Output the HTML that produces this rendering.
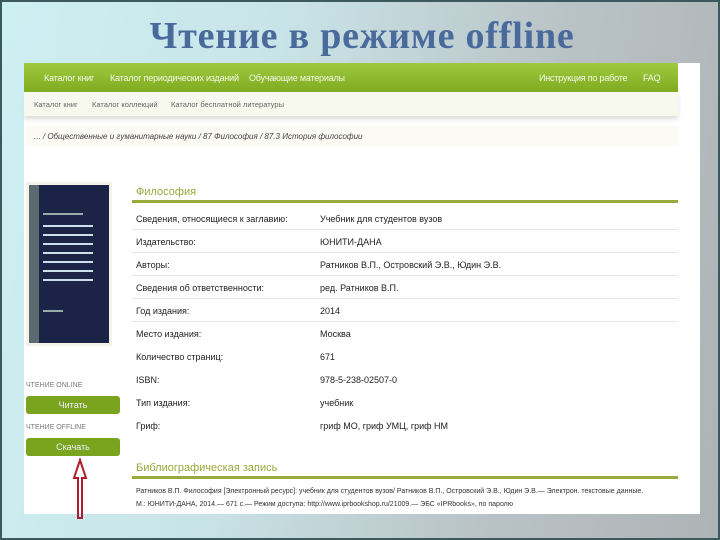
<!DOCTYPE html>
<html><head><meta charset="utf-8"><style>
*{margin:0;padding:0;box-sizing:border-box}
body{width:720px;height:540px;overflow:hidden;position:relative;font-family:"Liberation Sans",sans-serif;
background:linear-gradient(100deg,#cdf0f3 0%,#c9e4e8 35%,#b9c3c6 70%,#aeb3b5 100%);border:2px solid #3c5a5e}
.t{position:absolute;left:0;width:720px;top:12px;text-align:center;font-family:"Liberation Serif","Noto Serif CJK SC",serif;font-weight:bold;font-size:38px;color:#4a6a9c;letter-spacing:.8px}
.shot{position:absolute;left:22px;top:61px;width:676px;height:451px;background:#fff}
.nav{position:absolute;left:0;top:0;width:654px;height:29px;background:linear-gradient(#9fca3e,#7fab22);color:#f4f8e6;font-size:9px;letter-spacing:-.2px;white-space:nowrap}
.nav span{position:absolute;top:10px}
.sub{position:absolute;left:0;top:29px;width:654px;height:24px;background:#f7f8ee;font-size:7.5px;color:#666;box-shadow:0 3px 4px #ddd;white-space:nowrap}
.sub span{position:absolute;top:8px}
.bc{position:absolute;left:2px;top:63px;width:652px;height:20px;background:#fbfbf3;font-size:8px;color:#444;font-style:italic;padding:6px 0 0 8px;white-space:nowrap}
.cover{position:absolute;left:2px;top:119px;width:86px;height:164px;background:#1b2347;border:3px solid #f3f3ea}
.cover i{position:absolute;left:0;top:0;width:10px;height:100%;background:#5a6a6e}
.cover b{position:absolute;left:14px;height:2px;width:50px;background:#9aa}
.lbl{position:absolute;left:2px;font-size:7px;color:#777}
.btn{position:absolute;left:2px;width:94px;height:18px;background:#7ba41e;border-radius:3px;color:#eef;font-size:9px;text-align:center;line-height:18px}
.h{position:absolute;left:112px;font-size:11px;color:#99a83a}
.ln{position:absolute;left:108px;width:546px;height:3px;background:#97ab3b}
.row{position:absolute;left:108px;width:546px;height:23px;border-bottom:1px solid #e6e6e6;font-size:9px;color:#222}
.row span{position:absolute;top:7px}
.bib{position:absolute;left:112px;font-size:7px;color:#333;white-space:nowrap}
</style></head><body>
<div class="t">Чтение в режиме offline</div>
<div class="shot">
<div class="nav"><span style="left:20px">Каталог книг</span><span style="left:86px">Каталог периодических изданий</span><span style="left:225px">Обучающие материалы</span><span style="left:515px">Инструкция по работе</span><span style="left:619px">FAQ</span></div>
<div class="sub"><span style="left:10px">Каталог книг</span><span style="left:68px">Каталог коллекций</span><span style="left:147px">Каталог бесплатной литературы</span></div>
<div class="bc">... / Общественные и гуманитарные науки / 87 Философия / 87.3 История философии</div>
<div class="cover"><i></i><b style="top:28px;width:40px"></b><b style="top:40px;height:60px;background:repeating-linear-gradient(#cde 0 2px,transparent 2px 9px)"></b><b style="top:125px;width:20px"></b></div>
<div class="lbl" style="top:319px">ЧТЕНИЕ ONLINE</div>
<div class="btn" style="top:333px">Читать</div>
<div class="lbl" style="top:361px">ЧТЕНИЕ OFFLINE</div>
<div class="btn" style="top:375px">Скачать</div>
<svg style="position:absolute;left:47px;top:395px" width="18" height="62"><path d="M9 2 L15 20 L11 20 L11 60 L7 60 L7 20 L3 20 Z" fill="none" stroke="#b01c2c" stroke-width="2"/></svg>
<div class="h" style="top:123px">Философия</div>
<div class="ln" style="top:137px"></div>
<div class="row" style="top:144px"><span style="left:4px">Сведения, относящиеся к заглавию:</span><span style="left:188px">Учебник для студентов вузов</span></div>
<div class="row" style="top:167px"><span style="left:4px">Издательство:</span><span style="left:188px">ЮНИТИ-ДАНА</span></div>
<div class="row" style="top:190px"><span style="left:4px">Авторы:</span><span style="left:188px">Ратников В.П., Островский Э.В., Юдин Э.В.</span></div>
<div class="row" style="top:213px"><span style="left:4px">Сведения об ответственности:</span><span style="left:188px">ред. Ратников В.П.</span></div>
<div class="row" style="top:236px"><span style="left:4px">Год издания:</span><span style="left:188px">2014</span></div>
<div class="row" style="top:259px;border:0"><span style="left:4px">Место издания:</span><span style="left:188px">Москва</span></div>
<div class="row" style="top:282px;border:0"><span style="left:4px">Количество страниц:</span><span style="left:188px">671</span></div>
<div class="row" style="top:305px;border:0"><span style="left:4px">ISBN:</span><span style="left:188px">978-5-238-02507-0</span></div>
<div class="row" style="top:328px;border:0"><span style="left:4px">Тип издания:</span><span style="left:188px">учебник</span></div>
<div class="row" style="top:351px;border:0"><span style="left:4px">Гриф:</span><span style="left:188px">гриф МО, гриф УМЦ, гриф НМ</span></div>
<div class="h" style="top:399px">Библиографическая запись</div>
<div class="ln" style="top:413px"></div>
<div class="bib" style="top:425px">Ратников В.П. Философия [Электронный ресурс]: учебник для студентов вузов/ Ратников В.П., Островский Э.В., Юдин Э.В.— Электрон. текстовые данные.</div>
<div class="bib" style="top:438px">М.: ЮНИТИ-ДАНА, 2014.— 671 c.— Режим доступа: http://www.iprbookshop.ru/21009.— ЭБС «IPRbooks», по паролю</div>
</div>
</body></html>
